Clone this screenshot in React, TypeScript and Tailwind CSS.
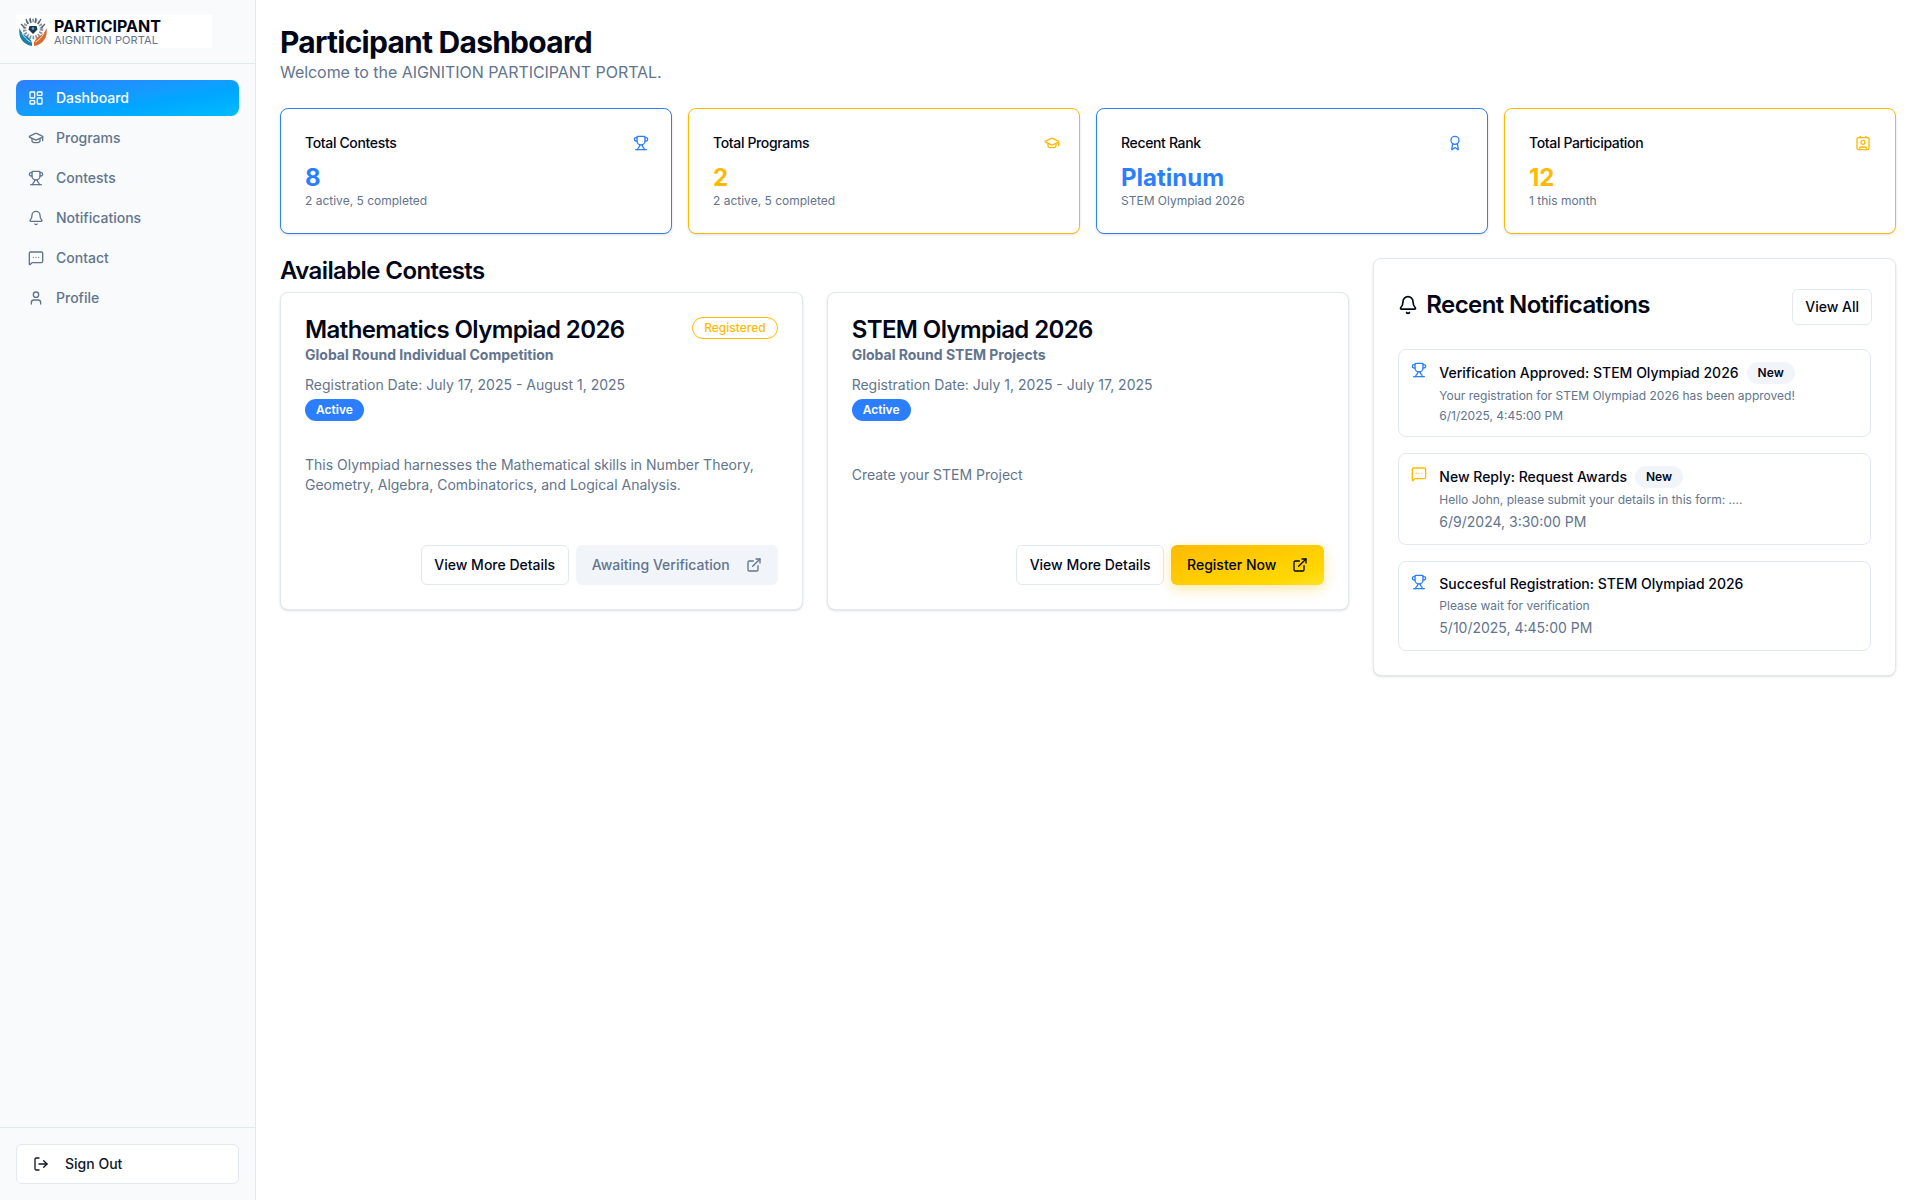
import {
  Award,
  Bell,
  Contact,
  ExternalLink,
  GraduationCap,
  LayoutDashboard,
  LogOut,
  MessageSquareMore,
  Trophy,
  User,
} from "lucide-react";

const navItems = [
  { label: "Dashboard", icon: LayoutDashboard, active: true },
  { label: "Programs", icon: GraduationCap },
  { label: "Contests", icon: Trophy },
  { label: "Notifications", icon: Bell },
  { label: "Contact", icon: MessageSquareMore },
  { label: "Profile", icon: User },
];

const stats = [
  { title: "Total Contests", value: "8", sub: "2 active, 5 completed", icon: Trophy, blue: true, iconClass: "size-4 -mr-[2px]" },
  { title: "Total Programs", value: "2", sub: "2 active, 5 completed", icon: GraduationCap, blue: false, iconClass: "size-4 -mr-[5px]" },
  { title: "Recent Rank", value: "Platinum", sub: "STEM Olympiad 2026", icon: Award, blue: true, iconClass: "size-4" },
  { title: "Total Participation", value: "12", sub: "1 this month", icon: Contact, blue: false, iconClass: "size-4" },
];

function Logo() {
  return (
    <svg width="30" height="30" viewBox="0 0 30 30" className="shrink-0">
      <circle cx="15" cy="12" r="8.5" fill="none" stroke="#8d97a3" strokeWidth="3.5" strokeDasharray="1.8 1.2" />
      <path d="M10 7L8 2M13 6l-1-5M17 6l1-5M20 7l3-5M7 11L3 7M23 11l4-4" stroke="#56616e" strokeWidth="1.3" />
      <path d="M11.5 9h7l1 3.5L15 17l-4.500-4.500z" fill="#17384d" />
      <circle cx="15" cy="11.500" r="1.300" fill="#4fb3d9" />
      <path d="M1.500 11c-1.500 9 3 16.500 12.500 18 .5-5-2-8-6-10-3-1.500-5.500-4.500-6.500-8z" fill="#1b7fac" />
      <path d="M4 16c2 4 5 7 8.500 9" stroke="#ffffff" strokeWidth="0.8" fill="none" />
      <path d="M28.500 11c1.500 9-3 16.500-12.500 18-.5-5 2-8 6-10 3-1.500 5.500-4.500 6.500-8z" fill="#dc6a2a" />
      <path d="M26 16c-2 4-5 7-8.500 9" stroke="#ffffff" strokeWidth="0.8" fill="none" />
    </svg>
  );
}

function Sidebar() {
  return (
    <aside className="w-[256px] shrink-0 min-h-[1200px] flex flex-col bg-slate-50 border-r border-slate-200">
      <div className="h-16 border-b border-slate-200 pt-[15px] pl-4">
        <div className="w-[196px] h-[33px] bg-white flex items-center pl-[2px] gap-[6px]">
          <Logo />
          <div className="flex flex-col">
            <span className="text-[16px] leading-[16px] font-bold text-slate-950">PARTICIPANT</span>
            <span className="text-[11px] leading-[12px] tracking-[0.01em] text-slate-500">AIGNITION PORTAL</span>
          </div>
        </div>
      </div>
      <nav className="flex-1 flex flex-col gap-1 px-4 pt-4">
        {navItems.map((item) => (
          <a
            key={item.label}
            className={
              item.active
                ? "h-9 rounded-lg flex items-center gap-3 px-3 text-sm font-medium text-white bg-gradient-to-br from-blue-500 to-sky-400"
                : "h-9 rounded-lg flex items-center gap-3 px-3 text-sm font-medium text-slate-500"
            }
          >
            <item.icon size={16} />
            {item.label}
          </a>
        ))}
      </nav>
      <div className="border-t border-slate-200 p-4 h-[73px]">
        <button className="w-full h-10 rounded-md border border-slate-200 bg-white flex items-center gap-4 pl-4 text-sm font-medium text-slate-900">
          <LogOut size={16} />
          Sign Out
        </button>
      </div>
    </aside>
  );
}

function StatCard({ title, value, sub, icon: Icon, blue, iconClass }: (typeof stats)[number]) {
  return (
    <div className={`h-[126px] rounded-lg border bg-white shadow-sm p-6 ${blue ? "border-blue-500" : "border-amber-400"}`}>
      <div className="flex items-center justify-between h-5 mb-2">
        <span className="text-sm leading-5 font-medium tracking-tight text-slate-950">{title}</span>
        <Icon className={`${iconClass} ${blue ? "text-blue-500" : "text-amber-400"}`} />
      </div>
      <div className={`text-2xl leading-[34px] -mb-0.5 font-bold ${blue ? "text-blue-500" : "text-amber-400"}`}>{value}</div>
      <div className="text-xs text-slate-500">{sub}</div>
    </div>
  );
}

function ContestCard(props: {
  title: string;
  subtitle: string;
  date: string;
  description: string;
  registered?: boolean;
}) {
  return (
    <div className="rounded-lg border border-slate-200 bg-white shadow-sm p-6 h-[318px] flex flex-col">
      <div className="flex items-start justify-between h-[26px]">
        <h3 className="text-2xl leading-[26px] font-semibold tracking-tight text-slate-950">{props.title}</h3>
        {props.registered && (
          <span className="h-[22px] px-[11px] rounded-full border border-amber-400 text-xs font-medium text-amber-400 flex items-center">
            Registered
          </span>
        )}
      </div>
      <p className="mt-[2px] text-sm leading-5 font-bold text-slate-500">{props.subtitle}</p>
      <p className="mt-[10px] text-sm leading-5 text-slate-500">{props.date}</p>
      <span className="mt-1 self-start h-[22px] px-[11px] rounded-full bg-blue-500 text-xs font-semibold text-white flex items-center">
        Active
      </span>
      <div className="h-[108px] flex items-center">
        <p className="text-sm leading-5 text-slate-500">{props.description}</p>
      </div>
      <div className="mt-4 flex justify-end gap-[7px]">
        <button className="h-10 w-[148px] rounded-md border border-slate-200 bg-white text-sm font-medium text-slate-950">
          View More Details
        </button>
        {props.registered ? (
          <button className="h-10 px-4 rounded-md bg-slate-100 text-sm font-medium text-slate-500 flex items-center gap-4">
            Awaiting Verification
            <ExternalLink size={16} />
          </button>
        ) : (
          <button className="h-10 px-4 rounded-md bg-gradient-to-br from-amber-400 to-yellow-300 shadow-[0_4px_14px_rgba(255,185,0,0.35)] text-sm font-medium text-slate-950 flex items-center gap-4">
            Register Now
            <ExternalLink size={16} />
          </button>
        )}
      </div>
    </div>
  );
}

function NotificationItem(props: {
  icon: typeof Trophy;
  blue: boolean;
  title: string;
  body: string;
  time: string;
  isNew?: boolean;
  smallTime?: boolean;
}) {
  const Icon = props.icon;
  return (
    <div className="rounded-lg border border-slate-200 bg-white p-3 flex gap-3">
      <Icon size={16} className={`shrink-0 ${props.blue ? "text-blue-500" : "text-amber-400"}`} />
      <div className="min-w-0">
        <div className="flex items-center gap-2 min-h-5">
          <span className="text-sm leading-5 font-medium text-slate-950">{props.title}</span>
          {props.isNew && (
            <span className="h-[22px] px-[11px] rounded-full bg-slate-100 text-xs font-semibold text-slate-950 flex items-center">
              New
            </span>
          )}
        </div>
        <p className="mt-1 text-xs text-slate-500">{props.body}</p>
        <p className={`mt-1 text-slate-500 ${props.smallTime ? "text-xs" : "text-sm"}`}>{props.time}</p>
      </div>
    </div>
  );
}

export default function App() {
  return (
    <div className="flex min-h-[1200px] bg-white font-['Inter',sans-serif]">
      <Sidebar />
      <main className="flex-1 min-w-0 p-6">
        <h1 className="text-3xl font-bold tracking-tight text-slate-950">Participant Dashboard</h1>
        <p className="text-base tracking-[-0.05px] text-slate-500">Welcome to the AIGNITION PARTICIPANT PORTAL.</p>

        <div className="mt-6 grid grid-cols-4 gap-4">
          {stats.map((s) => (
            <StatCard key={s.title} {...s} />
          ))}
        </div>

        <div className="mt-6 grid grid-cols-3 gap-6 items-start">
          <section className="col-span-2">
            <h2 className="text-2xl leading-[26px] font-semibold tracking-tight text-slate-950 mb-2">
              Available Contests
            </h2>
            <div className="grid grid-cols-2 gap-6">
              <ContestCard
                registered
                title="Mathematics Olympiad 2026"
                subtitle="Global Round Individual Competition"
                date="Registration Date: July 17, 2025 - August 1, 2025"
                description="This Olympiad harnesses the Mathematical skills in Number Theory, Geometry, Algebra, Combinatorics, and Logical Analysis."
              />
              <ContestCard
                title="STEM Olympiad 2026"
                subtitle="Global Round STEM Projects"
                date="Registration Date: July 1, 2025 - July 17, 2025"
                description="Create your STEM Project"
              />
            </div>
          </section>

          <section className="rounded-lg border border-slate-200 bg-white shadow-sm px-6 pb-6 pt-[30px]">
            <div className="flex items-center justify-between mb-6">
              <h2 className="-mt-1 flex items-center gap-2 text-2xl font-semibold tracking-tight text-slate-950">
                <Bell size={20} />
                Recent Notifications
              </h2>
              <button className="h-9 px-3 -mr-px rounded-md border border-slate-200 bg-white text-sm font-medium text-slate-950">
                View All
              </button>
            </div>
            <div className="flex flex-col gap-4">
              <NotificationItem
                icon={Trophy}
                blue
                isNew
                smallTime
                title="Verification Approved: STEM Olympiad 2026"
                body="Your registration for STEM Olympiad 2026 has been approved!"
                time="6/1/2025, 4:45:00 PM"
              />
              <NotificationItem
                icon={MessageSquareMore}
                blue={false}
                isNew
                title="New Reply: Request Awards"
                body="Hello John, please submit your details in this form: ...."
                time="6/9/2024, 3:30:00 PM"
              />
              <NotificationItem
                icon={Trophy}
                blue
                title="Succesful Registration: STEM Olympiad 2026"
                body="Please wait for verification"
                time="5/10/2025, 4:45:00 PM"
              />
            </div>
          </section>
        </div>
      </main>
    </div>
  );
}
